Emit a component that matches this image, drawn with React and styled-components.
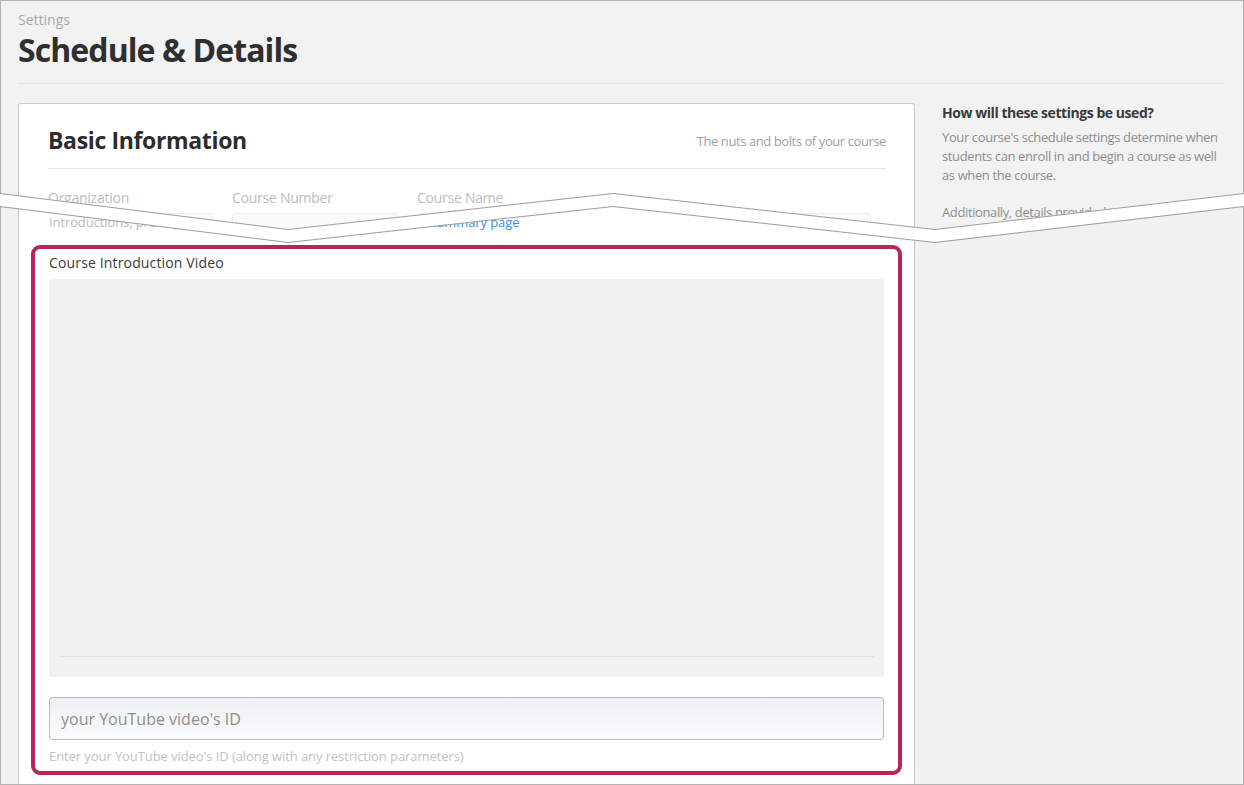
import React from "react";
import styled, { createGlobalStyle } from "styled-components";

const GlobalStyle = createGlobalStyle`
  html, body {
    margin: 0;
    padding: 0;
    background: #ffffff;
  }
  body {
    font-family: "Open Sans", "Liberation Sans", sans-serif;
    -webkit-font-smoothing: antialiased;
  }
  * {
    box-sizing: border-box;
  }
`;

const W = 1244;
const UPPER = [193, 229];
const LOWER = [206, 242];
const XS = [0, 288, 613, 935, W];

// y of the torn edge at each x point, alternating between peak and valley
const tornPoints = ([peak, valley]) =>
  XS.map((x, i) => `${x},${(i % 2 === 0 ? peak : valley) + 0.5}`).join(" ");

const App = () => {
  return (
    <>
      <GlobalStyle />
      <Frame>
        <UpperSlice>
          <PageTitle>
            <Eyebrow>Settings</Eyebrow>
            <Title>Schedule &amp; Details</Title>
          </PageTitle>
          <Columns>
            <Card>
              <CardHeader>
                <CardTitle>Basic Information</CardTitle>
                <CardSubtitle>The nuts and bolts of your course</CardSubtitle>
              </CardHeader>
              <FieldRow>
                <Field>
                  <FieldLabel>Organization</FieldLabel>
                  <FieldInput />
                </Field>
                <Field>
                  <FieldLabel>Course Number</FieldLabel>
                  <FieldInput />
                </Field>
                <Field>
                  <FieldLabel>Course Name</FieldLabel>
                  <FieldInput />
                </Field>
              </FieldRow>
            </Card>
            <Sidebar>
              <SidebarTitle>How will these settings be used?</SidebarTitle>
              <SidebarText>
                Your course's schedule settings determine when students can
                enroll in and begin a course as well as when the course.
              </SidebarText>
              <SidebarText>
                Additionally, details provided in this section appear on your
                course's summary page.
              </SidebarText>
            </Sidebar>
          </Columns>
        </UpperSlice>

        <LowerSlice>
          <Columns $fill>
            <Card $continued>
              <Hint>
                Introductions, prerequisites, FAQs that are used on your course{" "}
                <HintLink>summary page</HintLink>
              </Hint>
              <Highlight>
                <SectionLabel>Course Introduction Video</SectionLabel>
                <VideoArea>
                  <VideoBar />
                </VideoArea>
                <VideoInput placeholder="your YouTube video's ID" />
                <HelpText>
                  Enter your YouTube video's ID (along with any restriction
                  parameters)
                </HelpText>
              </Highlight>
            </Card>
            <Sidebar />
          </Columns>
        </LowerSlice>

        <TornEdge viewBox={`0 0 ${W} 785`} width={W} height={785}>
          <polyline points={tornPoints(UPPER)} fill="none" stroke="#9c9c9c" strokeWidth="1" />
          <polyline points={tornPoints(LOWER)} fill="none" stroke="#9c9c9c" strokeWidth="1" />
        </TornEdge>
      </Frame>
    </>
  );
};

// Styled Components
const Frame = styled.div`
  position: relative;
  width: ${W}px;
  height: 785px;
  background: #ffffff;
  overflow: hidden;
`;

const UpperSlice = styled.div`
  height: 230px;
  background: #f2f2f2;
  border: 1px solid #b3b3b3;
  border-bottom: none;
  padding: 9px 19px 0 17px;
  clip-path: polygon(
    0 0,
    ${W}px 0,
    ${W}px ${UPPER[0]}px,
    ${XS[3]}px ${UPPER[1]}px,
    ${XS[2]}px ${UPPER[0]}px,
    ${XS[1]}px ${UPPER[1]}px,
    0 ${UPPER[0]}px
  );
`;

const LowerSlice = styled.div`
  display: flex;
  height: ${785 - LOWER[0]}px;
  margin-top: ${LOWER[0] - 230}px;
  background: #f1f1f1;
  border: 1px solid #b3b3b3;
  border-top: none;
  padding: 0 19px 0 17px;
  clip-path: polygon(
    0 0,
    ${XS[1]}px ${LOWER[1] - LOWER[0]}px,
    ${XS[2]}px 0,
    ${XS[3]}px ${LOWER[1] - LOWER[0]}px,
    ${W}px 0,
    ${W}px 100%,
    0 100%
  );
`;

const TornEdge = styled.svg`
  position: absolute;
  top: 0;
  left: 0;
  pointer-events: none;
`;

const PageTitle = styled.header`
  display: flex;
  flex-direction: column;
  border-bottom: 1px solid #e1e1e1;
  padding-bottom: 13px;
  margin-bottom: 19px;
`;

const Eyebrow = styled.span`
  font-size: 14px;
  line-height: 20px;
  color: #a9a9a9;
`;

const Title = styled.h1`
  margin: 0;
  font-size: 32px;
  line-height: 40px;
  font-weight: 700;
  color: #2f2f2f;
  letter-spacing: -0.92px;
`;

const Columns = styled.div`
  display: grid;
  grid-template-columns: 897px 1fr;
  column-gap: 26px;
  width: 100%;
  height: ${(p) => (p.$fill ? "100%" : "auto")};
`;

const Card = styled.section`
  background: #ffffff;
  border: 1px solid #c9c9c9;
  border-top: ${(p) => (p.$continued ? "none" : "1px solid #c9c9c9")};
  border-bottom: none;
  border-radius: ${(p) => (p.$continued ? "0" : "3px 3px 0 0")};
  padding: ${(p) => (p.$continued ? "0 12px" : "0 28px 0 29px")};
  height: ${(p) => (p.$continued ? "100%" : "140px")};
`;

const CardHeader = styled.div`
  display: flex;
  justify-content: space-between;
  align-items: center;
  padding: 21px 0 13px;
  border-bottom: 1px solid #e4e4e4;
`;

const CardTitle = styled.h2`
  margin: 0;
  font-size: 23px;
  line-height: 30px;
  font-weight: 700;
  color: #2c2c2c;
  letter-spacing: -0.35px;
`;

const CardSubtitle = styled.span`
  font-size: 13px;
  color: #9f9f9f;
  padding-top: 2px;
  letter-spacing: -0.42px;
`;

const FieldRow = styled.div`
  display: grid;
  grid-template-columns: 165px 166px 454px;
  column-gap: 19px;
  margin-top: 19px;
`;

const Field = styled.div`
  display: flex;
  flex-direction: column;
  gap: 5px;
`;

const FieldLabel = styled.span`
  font-size: 14px;
  line-height: 20px;
  color: #bdbdbd;
  letter-spacing: -0.25px;
`;

const FieldInput = styled.div`
  height: 36px;
  border: 1px solid #ebebeb;
  border-radius: 3px;
  background: #f9fafb;
`;

const Sidebar = styled.aside`
  display: flex;
  flex-direction: column;
  padding-left: 1px;
`;

const SidebarTitle = styled.h3`
  margin: 0 0 5px;
  font-size: 14px;
  line-height: 20px;
  font-weight: 700;
  color: #3a3a3a;
  letter-spacing: -0.45px;
`;

const SidebarText = styled.p`
  margin: 0 0 18px;
  font-size: 13px;
  line-height: 19px;
  color: #8e8e8e;
  letter-spacing: -0.38px;
`;

const Hint = styled.p`
  margin: 0;
  padding: 7px 0 0 18px;
  font-size: 13px;
  line-height: 18px;
  color: #b9b9b9;
  white-space: nowrap;
  letter-spacing: -0.1px;
`;

const HintLink = styled.a`
  color: #3d8ce2;
  cursor: pointer;
`;

const Highlight = styled.div`
  display: flex;
  flex-direction: column;
  margin-top: 14px;
  border: 4px solid #b9245f;
  border-radius: 9px;
  padding: 4px 14px 6px;
`;

const SectionLabel = styled.span`
  font-size: 14px;
  line-height: 20px;
  color: #3a3a3a;
  letter-spacing: 0.15px;
`;

const VideoArea = styled.div`
  display: flex;
  flex-direction: column;
  justify-content: flex-end;
  height: 398px;
  margin-top: 6px;
  background: #f1f1f1;
  border-radius: 3px;
`;

const VideoBar = styled.div`
  margin: 0 10px 20px;
  border-top: 1px solid #e1e1e1;
`;

const VideoInput = styled.input`
  height: 43px;
  margin-top: 20px;
  padding: 0 11px;
  border: 1px solid #b5bcc7;
  border-radius: 3px;
  background: linear-gradient(#edf0f3, #fafbfc);
  font-family: "Open Sans", "Liberation Sans", sans-serif;
  font-size: 16px;
  color: #555;
  outline: none;

  &::placeholder {
    color: #8f8f8f;
  }
`;

const HelpText = styled.span`
  margin-top: 7px;
  font-size: 13px;
  line-height: 18px;
  color: #c2c2c2;
  letter-spacing: -0.08px;
`;

export default App;
